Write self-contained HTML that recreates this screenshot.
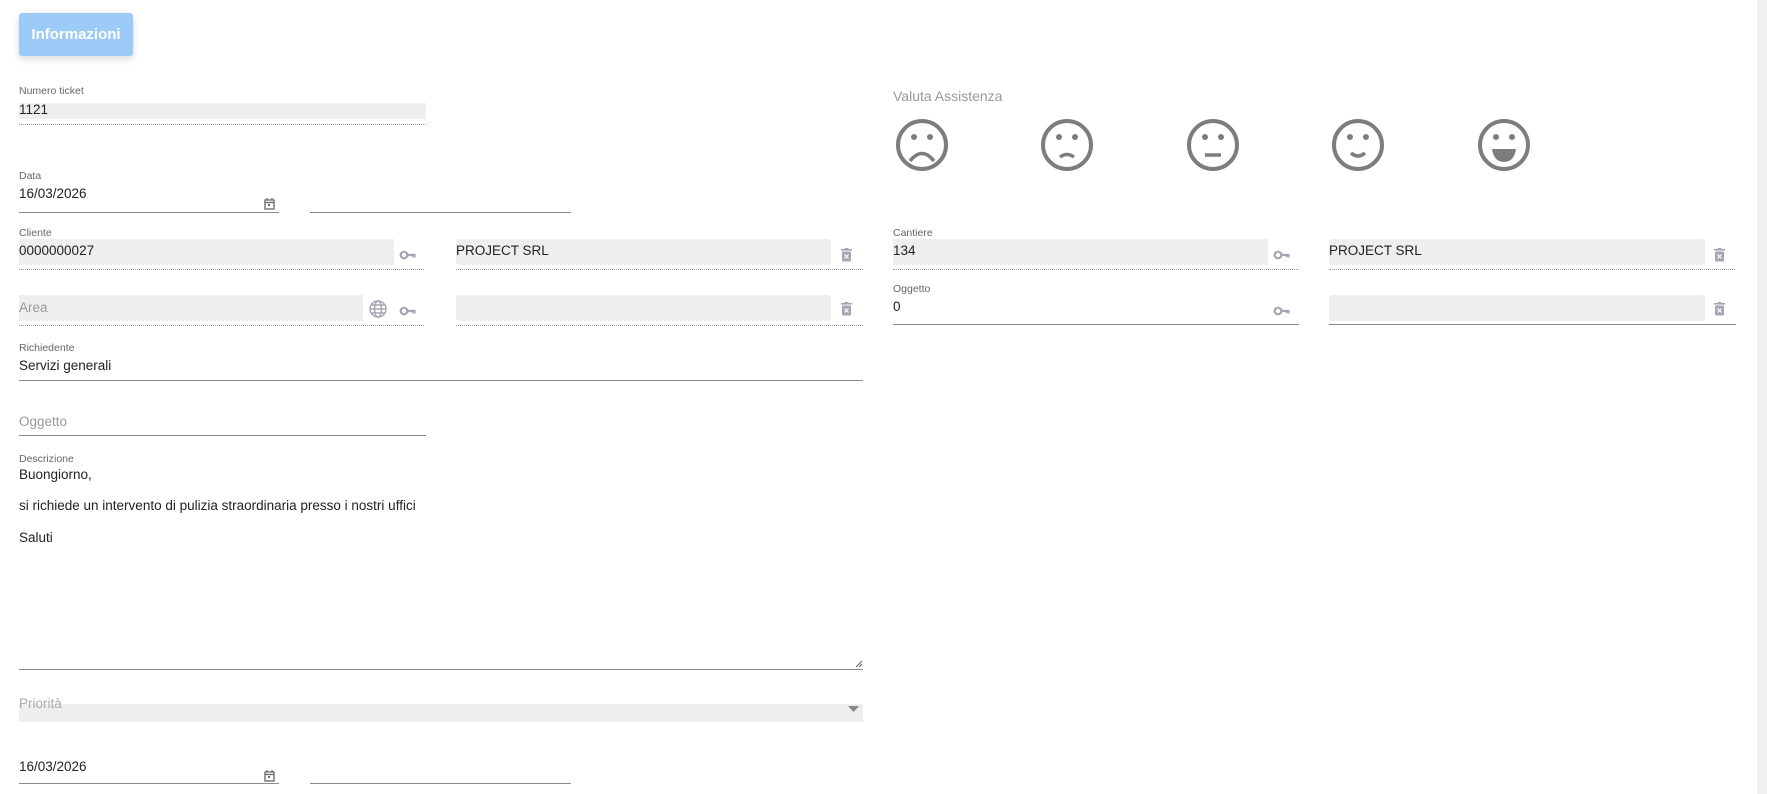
<!DOCTYPE html>
<html><head><meta charset="utf-8"><style>
*{margin:0;padding:0;box-sizing:border-box}
body{width:1767px;height:794px;background:#fff;font-family:"Liberation Sans",sans-serif;position:relative;overflow:hidden;color:#222}
.a{position:absolute}
.lbl{position:absolute;font-size:10.5px;color:#666}
.val{position:absolute;font-size:13.5px;color:#222}
.bg{position:absolute;background:#eeeeee;border-radius:3px}
.dot{position:absolute;height:0;border-top:1px dotted #999}
.ln{position:absolute;height:1px;background:#8a8a8a}
.ph{position:absolute;font-size:13.5px;color:#999}
</style></head><body>
<div class="a" style="left:19px;top:13px;width:114px;height:43px;background:#9dcbf7;border-radius:3px;box-shadow:0 3px 8px rgba(0,0,0,.15);color:#fff;font-size:15px;font-weight:bold;text-align:center;line-height:43px">Informazioni</div>

<div class="lbl" style="left:19px;top:85px">Numero ticket</div>
<div class="bg" style="left:19px;top:103px;width:407px;height:16px;border-radius:0"></div>
<div class="val" style="left:19px;top:102px">1121</div>
<div class="dot" style="left:19px;top:124px;width:407px"></div>

<div class="lbl" style="left:19px;top:170px">Data</div>
<div class="val" style="left:19px;top:186px">16/03/2026</div>
<div class="ln" style="left:19px;top:212px;width:260px"></div>
<div class="ln" style="left:310px;top:212px;width:261px"></div>

<div class="lbl" style="left:19px;top:227px">Cliente</div>
<div class="bg" style="left:19px;top:239px;width:375px;height:26px;border-radius:0"></div>
<div class="val" style="left:19px;top:243px">0000000027</div>
<div class="dot" style="left:19px;top:269px;width:405px"></div>
<div class="bg" style="left:456px;top:239px;width:375px;height:26px"></div>
<div class="val" style="left:456px;top:243px">PROJECT SRL</div>
<div class="dot" style="left:456px;top:269px;width:407px"></div>

<div class="bg" style="left:19px;top:295px;width:344px;height:26px;border-radius:0"></div>
<div class="ph" style="left:19px;top:300px">Area</div>
<div class="dot" style="left:19px;top:325px;width:405px"></div>
<div class="bg" style="left:456px;top:295px;width:375px;height:26px"></div>
<div class="dot" style="left:456px;top:325px;width:407px"></div>

<div class="lbl" style="left:19px;top:342px">Richiedente</div>
<div class="val" style="left:19px;top:358px">Servizi generali</div>
<div class="ln" style="left:19px;top:380px;width:844px"></div>

<div class="ph" style="left:19px;top:414px">Oggetto</div>
<div class="ln" style="left:19px;top:435px;width:407px"></div>

<div class="lbl" style="left:19px;top:453px">Descrizione</div>
<div class="val" style="left:19px;top:467px">Buongiorno,</div>
<div class="val" style="left:19px;top:498px">si richiede un intervento di pulizia straordinaria presso i nostri uffici</div>
<div class="val" style="left:19px;top:530px">Saluti</div>
<div class="ln" style="left:19px;top:669px;width:844px"></div>
<svg class="a" style="left:855px;top:660px" width="8" height="8"><path d="M1 7L7 1M4 7L7 4" stroke="#666" stroke-width="1"/></svg>

<div class="bg" style="left:19px;top:704px;width:844px;height:18px;border-radius:0"></div>
<div class="ph" style="left:19px;top:696px;color:#aaa">Priorità</div>
<svg class="a" style="left:848px;top:706px" width="11" height="6"><path d="M0 0H11L5.5 6Z" fill="#888"/></svg>

<div class="val" style="left:19px;top:759px">16/03/2026</div>
<div class="ln" style="left:19px;top:783px;width:260px"></div>
<div class="ln" style="left:310px;top:783px;width:261px"></div>

<div class="a" style="left:893px;top:88px;font-size:14px;color:#999">Valuta Assistenza</div>

<div class="lbl" style="left:893px;top:227px">Cantiere</div>
<div class="bg" style="left:893px;top:239px;width:375px;height:26px;border-radius:0"></div>
<div class="val" style="left:893px;top:243px">134</div>
<div class="dot" style="left:893px;top:269px;width:406px"></div>
<div class="bg" style="left:1329px;top:239px;width:376px;height:26px"></div>
<div class="val" style="left:1329px;top:243px">PROJECT SRL</div>
<div class="dot" style="left:1329px;top:269px;width:406px"></div>

<div class="lbl" style="left:893px;top:283px">Oggetto</div>
<div class="val" style="left:893px;top:299px">0</div>
<div class="ln" style="left:893px;top:324px;width:406px"></div>
<div class="bg" style="left:1329px;top:295px;width:376px;height:26px"></div>
<div class="ln" style="left:1329px;top:324px;width:407px"></div>

<div class="a" style="left:1757px;top:0;width:10px;height:794px;background:#f1f1f1"></div>

<svg class="a" style="left:0;top:0" width="1767" height="794">
<defs>
<g id="key" fill="#a4a7b3"><circle cx="4" cy="4" r="3.3" fill="none" stroke="#a4a7b3" stroke-width="2.2"/><rect x="6.5" y="2.8" width="9" height="2.4"/><rect x="12" y="4" width="1.6" height="2.5"/><rect x="14" y="4" width="1.6" height="2.5"/></g>
<g id="trash" fill="#a4a7b3"><rect x="0" y="1" width="11" height="1.6"/><rect x="3.5" y="0" width="4" height="1.5"/><rect x="1" y="3.5" width="9" height="10" rx="1"/><path d="M3.5 6.5L7.5 10.5M7.5 6.5L3.5 10.5" stroke="#fff" stroke-width="1.2"/></g>
<g id="cal" fill="none" stroke="#666" stroke-width="1.3"><rect x="1" y="2" width="9" height="9"/><path d="M1 4.5H10M3 0V2M8 0V2"/><rect x="4" y="6" width="2" height="2" fill="#666" stroke="none"/></g>
</defs>
<use href="#cal" x="264" y="198"/>
<use href="#cal" x="264" y="770"/>
<use href="#key" x="400" y="251"/>
<use href="#key" x="400" y="307"/>
<use href="#key" x="1274" y="251"/>
<use href="#key" x="1274" y="307"/>
<use href="#trash" x="841" y="248"/>
<use href="#trash" x="841" y="302"/>
<use href="#trash" x="1714" y="248"/>
<use href="#trash" x="1714" y="302"/>
<g transform="translate(378,309)" fill="none" stroke="#a4a7b3" stroke-width="1.4"><circle r="8"/><ellipse rx="3.5" ry="8"/><path d="M-8 0H8M-7 -4H7M-7 4H7"/></g>
<g fill="none" stroke="#7d7d7d" stroke-width="4">
<circle cx="922" cy="145" r="24"/><circle cx="1067" cy="145" r="24"/><circle cx="1213" cy="145" r="24"/><circle cx="1358" cy="145" r="24"/><circle cx="1504" cy="145" r="24"/>
</g>
<g fill="#7d7d7d">
<circle cx="914" cy="137" r="3"/><circle cx="930" cy="137" r="3"/>
<circle cx="1059" cy="137" r="3"/><circle cx="1075" cy="137" r="3"/>
<circle cx="1205" cy="137" r="3"/><circle cx="1221" cy="137" r="3"/>
<circle cx="1350" cy="137" r="3"/><circle cx="1366" cy="137" r="3"/>
<circle cx="1496" cy="137" r="3"/><circle cx="1512" cy="137" r="3"/>
<path d="M1492 149H1516Q1514 162 1504 162Q1494 162 1492 149Z"/>
</g>
<g fill="none" stroke="#7d7d7d" stroke-width="3.5">
<path d="M910 161Q922 146 934 161"/>
<path d="M1060 157Q1067 152 1074 157"/>
<path d="M1205 155H1221"/>
<path d="M1351 153Q1358 159 1365 153"/>
</g>
</svg>
</body></html>
